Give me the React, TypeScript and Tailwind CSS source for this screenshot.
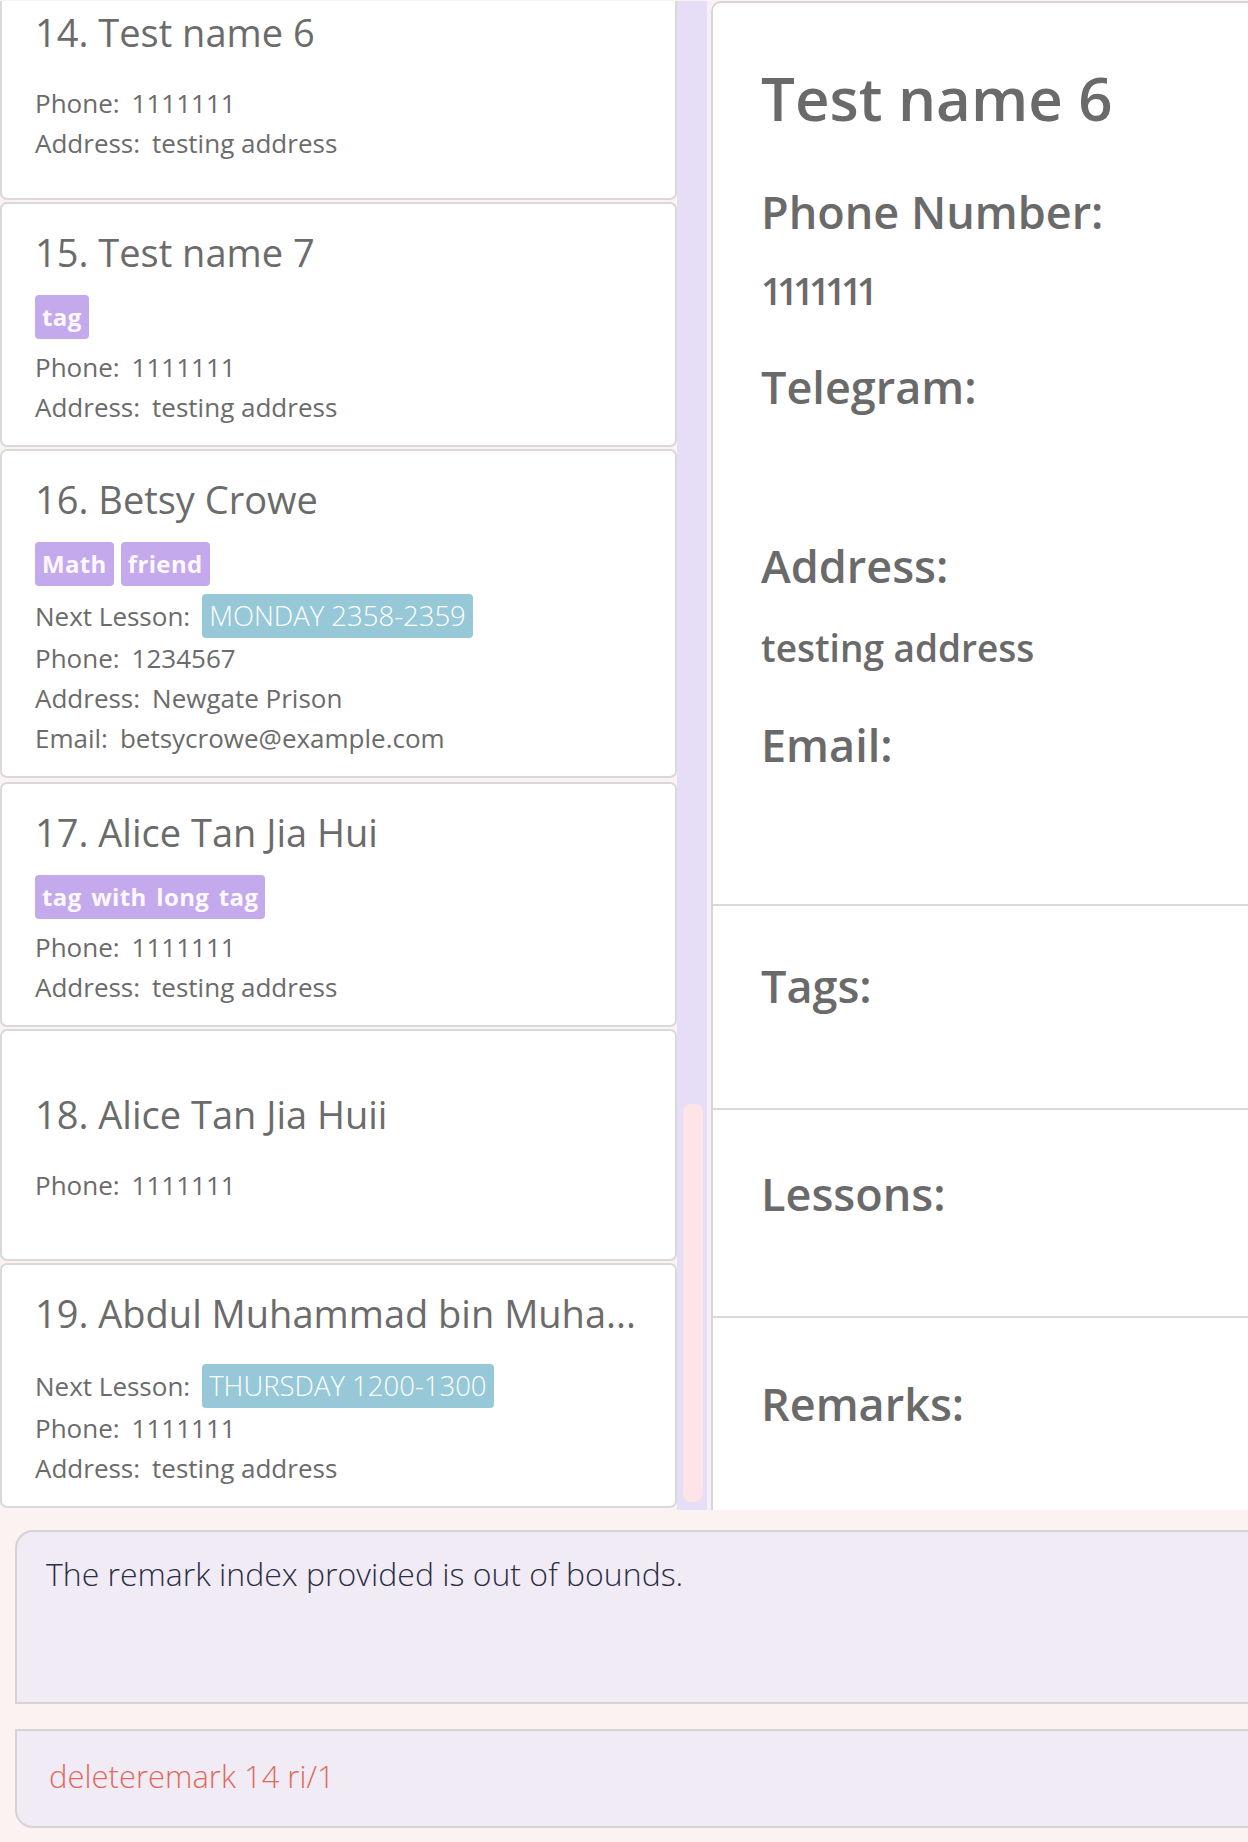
type Person = {
  n: number;
  name: string;
  tags?: string[];
  lesson?: string;
  phone: string;
  address?: string;
  email?: string;
};

const people: Person[] = [
  { n: 14, name: 'Test name 6', phone: '1111111', address: 'testing address' },
  { n: 15, name: 'Test name 7', tags: ['tag'], phone: '1111111', address: 'testing address' },
  {
    n: 16,
    name: 'Betsy Crowe',
    tags: ['Math', 'friend'],
    lesson: 'MONDAY 2358-2359',
    phone: '1234567',
    address: 'Newgate Prison',
    email: 'betsycrowe@example.com',
  },
  { n: 17, name: 'Alice Tan Jia Hui', tags: ['tag with long tag'], phone: '1111111', address: 'testing address' },
  { n: 18, name: 'Alice Tan Jia Huii', phone: '1111111' },
  { n: 19, name: 'Abdul Muhammad bin Muha...', lesson: 'THURSDAY 1200-1300', phone: '1111111', address: 'testing address' },
];

// spacing per card, the list is scrolled so card 14 starts above the top
const cardPad: Record<number, string> = {
  14: '-mt-[19px] pt-[22px] pb-[35px]',
  17: 'mt-[2px] pt-[22px] pb-[18px]',
  18: 'pt-[57px] pb-[54px]',
};

function Line({ label, value }: { label: string; value: string }) {
  return (
    <div className="flex h-[40px] items-center gap-3">
      <span>{label}</span>
      <span>{value}</span>
    </div>
  );
}

function PersonCard({ p }: { p: Person }) {
  return (
    <div
      className={`rounded-[7px] border-2 border-[#d9d9d9] bg-white pl-[33px] pr-4 text-[#6b6b6b] ${
        cardPad[p.n] ?? 'pt-[22px] pb-[18px]'
      }`}
    >
      <div className="whitespace-nowrap text-[38px] leading-[52px]">
        {p.n}. {p.name}
      </div>
      <div className="mt-[17px] flex gap-[7px]">
        {p.tags?.map((t) => (
          <span
            key={t}
            className="flex h-[44px] items-center rounded-[4px] bg-[#c5a9ed] px-[7px] text-[24px] font-bold tracking-[0.015em] text-[#fbf8ff] [word-spacing:3px]"
          >
            {t}
          </span>
        ))}
      </div>
      <div className="mt-[8px] text-[26px]">
        {p.lesson && (
          <div className="flex h-[44px] items-center gap-3">
            <span>Next Lesson:</span>
            <span className="flex h-[44px] items-center rounded-[4px] bg-[#96c8d8] px-[7px] text-[27.5px] font-light text-white">
              {p.lesson}
            </span>
          </div>
        )}
        <Line label="Phone:" value={p.phone} />
        {p.address && <Line label="Address:" value={p.address} />}
        {p.email && <Line label="Email:" value={p.email} />}
      </div>
    </div>
  );
}

function DetailPanel() {
  return (
    <div className="min-w-0 flex-1 rounded-tl-[10px] border-l-2 border-t-2 border-[#d6d6d6] bg-white text-[#6a6a6a]">
      <div className="h-[903px] border-b-2 border-[#d9d9d9] pl-[48px] pt-[65px]">
        <div className="text-[60px] font-semibold leading-none">Test name 6</div>
        <div className="mt-[61px] text-[45px] font-semibold leading-none">Phone Number:</div>
        <div className="mt-[38px] text-[37px] font-semibold leading-none tracking-[-0.14em]">1111111</div>
        <div className="mt-[55px] text-[45px] font-semibold leading-none">Telegram:</div>
        <div className="mt-[134px] text-[45px] font-semibold leading-none">Address:</div>
        <div className="mt-[41px] text-[37px] font-semibold leading-none">testing address</div>
        <div className="mt-[56px] text-[45px] font-semibold leading-none">Email:</div>
      </div>
      <div className="h-[204px] border-b-2 border-[#d9d9d9] pl-[48px] pt-[57px]">
        <div className="text-[45px] font-semibold leading-none">Tags:</div>
      </div>
      <div className="h-[208px] border-b-2 border-[#d9d9d9] pl-[48px] pt-[61px]">
        <div className="text-[45px] font-semibold leading-none">Lessons:</div>
      </div>
      <div className="pl-[48px] pt-[63px]">
        <div className="text-[45px] font-semibold leading-none">Remarks:</div>
      </div>
    </div>
  );
}

export default function App() {
  return (
    <div className="h-[1842px] w-[1248px] overflow-hidden bg-[#fcf2f2] font-['Open_Sans',sans-serif]">
      <div className="flex h-[1510px] pt-px">
        {/* person list */}
        <div className="flex w-[677px] flex-col gap-[2px] overflow-hidden">
          {people.map((p) => (
            <PersonCard key={p.n} p={p} />
          ))}
        </div>

        {/* scrollbar */}
        <div className="w-[30px] bg-[#e6ddf6] pl-[6px] pt-[1103px]">
          <div className="h-[398px] w-[20px] rounded-[8px] bg-[#fde4e6]" />
        </div>
        <div className="w-[4px] bg-[#f8eef6]" />

        <DetailPanel />
      </div>

      <div className="pl-[15px] pt-[20px]">
        <div className="h-[174px] rounded-tl-[18px] border-y-2 border-l-2 border-[#d4d4d4] bg-[#f1ebf6] pl-[29px] pt-[26px]">
          <div className="text-[32px] font-light leading-none text-[#2a2f45]">
            The remark index provided is out of bounds.
          </div>
        </div>
        <div className="mt-[25px] h-[99px] rounded-bl-[18px] border-y-2 border-l-2 border-[#d4d4d4] bg-[#f1ebf6] pl-[32px] pt-[30px]">
          <div className="text-[31px] font-light leading-none text-[#e06a5a]">deleteremark 14 ri/1</div>
        </div>
      </div>
    </div>
  );
}
